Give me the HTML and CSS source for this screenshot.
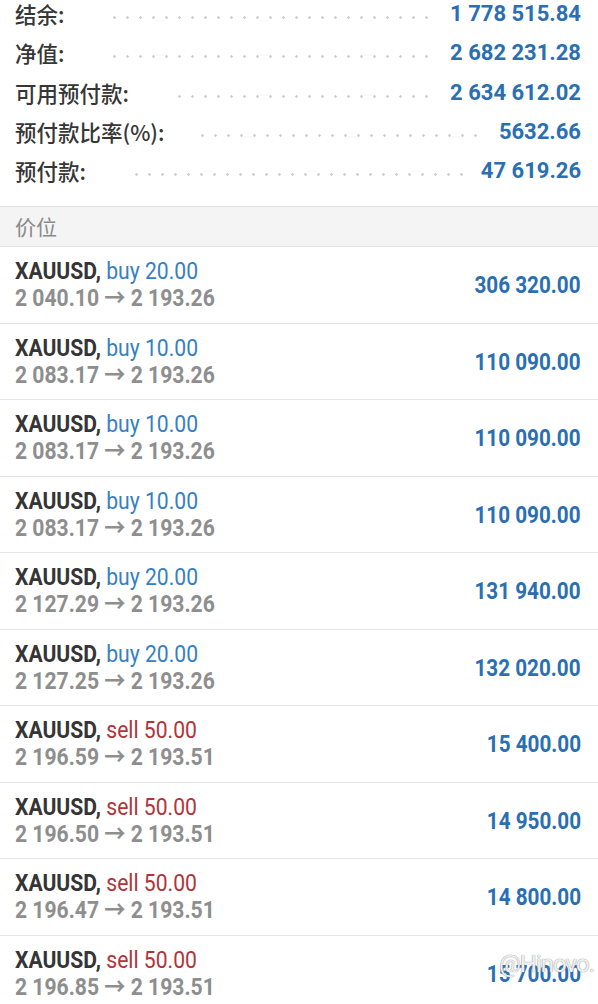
FILE: index.html
```html
<!DOCTYPE html>
<html lang="zh">
<head>
<meta charset="utf-8">
<title>交易</title>
<link rel="stylesheet" href="styles.css">
</head>
<body>
<div class="summary">
  <div class="srow"><span class="slabel">结余:</span><span class="leader"></span><span class="svalue">1 778 515.84</span></div>
  <div class="srow"><span class="slabel">净值:</span><span class="leader"></span><span class="svalue">2 682 231.28</span></div>
  <div class="srow"><span class="slabel">可用预付款:</span><span class="leader"></span><span class="svalue">2 634 612.02</span></div>
  <div class="srow"><span class="slabel">预付款比率(%):</span><span class="leader short"></span><span class="svalue">5632.66</span></div>
  <div class="srow"><span class="slabel">预付款:</span><span class="leader"></span><span class="svalue">47 619.26</span></div>
</div>
<div class="header">价位</div>
<div class="list">
  <div class="row"><div class="info"><div class="l1"><b class="sym">XAUUSD,</b> <span class="buy">buy 20.00</span></div><div class="l2">2 040.10 → 2 193.26</div></div><div class="profit">306 320.00</div></div>
  <div class="row"><div class="info"><div class="l1"><b class="sym">XAUUSD,</b> <span class="buy">buy 10.00</span></div><div class="l2">2 083.17 → 2 193.26</div></div><div class="profit">110 090.00</div></div>
  <div class="row"><div class="info"><div class="l1"><b class="sym">XAUUSD,</b> <span class="buy">buy 10.00</span></div><div class="l2">2 083.17 → 2 193.26</div></div><div class="profit">110 090.00</div></div>
  <div class="row"><div class="info"><div class="l1"><b class="sym">XAUUSD,</b> <span class="buy">buy 10.00</span></div><div class="l2">2 083.17 → 2 193.26</div></div><div class="profit">110 090.00</div></div>
  <div class="row"><div class="info"><div class="l1"><b class="sym">XAUUSD,</b> <span class="buy">buy 20.00</span></div><div class="l2">2 127.29 → 2 193.26</div></div><div class="profit">131 940.00</div></div>
  <div class="row"><div class="info"><div class="l1"><b class="sym">XAUUSD,</b> <span class="buy">buy 20.00</span></div><div class="l2">2 127.25 → 2 193.26</div></div><div class="profit">132 020.00</div></div>
  <div class="row"><div class="info"><div class="l1"><b class="sym">XAUUSD,</b> <span class="sell">sell 50.00</span></div><div class="l2">2 196.59 → 2 193.51</div></div><div class="profit">15 400.00</div></div>
  <div class="row"><div class="info"><div class="l1"><b class="sym">XAUUSD,</b> <span class="sell">sell 50.00</span></div><div class="l2">2 196.50 → 2 193.51</div></div><div class="profit">14 950.00</div></div>
  <div class="row"><div class="info"><div class="l1"><b class="sym">XAUUSD,</b> <span class="sell">sell 50.00</span></div><div class="l2">2 196.47 → 2 193.51</div></div><div class="profit">14 800.00</div></div>
  <div class="row last"><div class="info"><div class="l1"><b class="sym">XAUUSD,</b> <span class="sell">sell 50.00</span></div><div class="l2">2 196.85 → 2 193.51</div></div><div class="profit">15 700.00</div><span class="mark">@Hinovo.</span></div>
</div>
</body>
</html>
```
FILE: styles.css
```css
html, body {
  margin: 0;
  padding: 0;
  background: #ffffff;
}
body {
  width: 598px;
  height: 1004px;
  overflow: hidden;
  font-family: Roboto, "Noto Sans CJK SC", sans-serif;
}
.summary {
  margin-top: -6px;
  padding-bottom: 16px;
}
.srow {
  display: flex;
  align-items: center;
  height: 39.3px;
  padding: 0 17px 0 15px;
}
.slabel {
  font-family: "Noto Sans CJK SC", Roboto, sans-serif;
  font-size: 21.5px;
  font-weight: 500;
  color: #363636;
  white-space: nowrap;
}
.leader {
  flex: 1;
  height: 3px;
  margin: 8px 12px 0 44px;
  background-image: radial-gradient(circle, #cfcfcf 1.1px, rgba(255,255,255,0) 1.5px);
  background-size: 13px 3px;
  background-repeat: repeat-x;
}
.leader.short { margin-left: 32px; }
.svalue {
  font-size: 22px;
  font-weight: 700;
  color: #2a6fb2;
  white-space: nowrap;
}
.header {
  height: 39px;
  line-height: 39px;
  padding-left: 15px;
  background: #f4f4f4;
  border-top: 1px solid #e0e0e0;
  border-bottom: 1px solid #e2e2e2;
  font-family: "Noto Sans CJK SC", sans-serif;
  font-size: 21px;
  color: #8a8a8a;
}
.row {
  position: relative;
  display: flex;
  align-items: center;
  justify-content: space-between;
  height: 75.5px;
  padding: 0 17px 0 15px;
  border-bottom: 1px solid #e4e4e4;
}
.info {
  font-size: 24px;
  line-height: 27px;
  white-space: nowrap;
  transform: scaleX(0.88);
  transform-origin: left center;
}
.sym {
  font-weight: 700;
  color: #353535;
}
.buy { color: #3580c2; }
.sell { color: #b1343a; }
.l2 {
  font-weight: 700;
  color: #8e8e8e;
}
.profit {
  font-size: 23.5px;
  font-weight: 700;
  color: #2a6fb2;
  white-space: nowrap;
  transform: scaleX(0.88);
  transform-origin: right center;
}
.mark {
  position: absolute;
  right: 4px;
  top: 14px;
  font-size: 24px;
  color: rgba(255,255,255,0.85);
  text-shadow: 0 0 1px #9a9a9a, 0 0 1px #9a9a9a;
  letter-spacing: -1px;
}
```
